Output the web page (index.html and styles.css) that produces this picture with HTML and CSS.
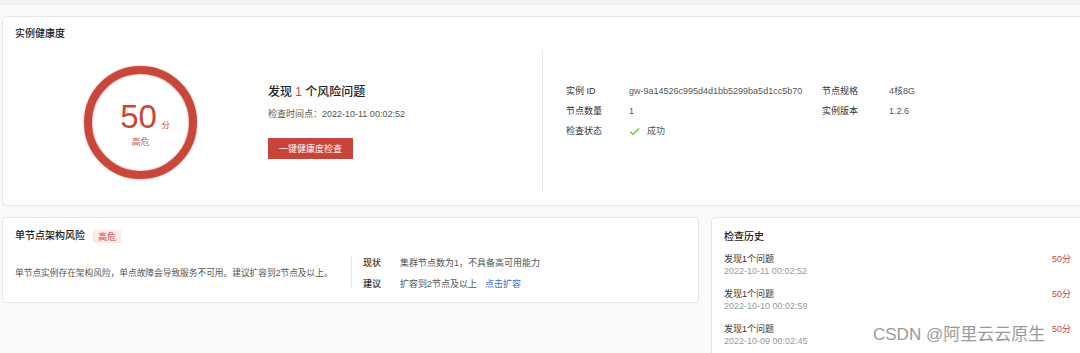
FILE: index.html
```html
<!DOCTYPE html>
<html lang="zh-CN">
<head>
<meta charset="utf-8">
<link rel="stylesheet" href="styles.css">
</head>
<body>
<div class="page">
  <div class="topbar"></div>

  <section class="card health">
    <h2 class="card-title">实例健康度</h2>
    <div class="health-body">
      <div class="health-left">
        <div class="score-ring">
          <div class="score-line"><span class="score-num">50</span><span class="score-unit">分</span></div>
          <div class="score-level">高危</div>
        </div>
        <div class="summary">
          <div class="summary-title">发现 <span class="red">1</span> 个风险问题</div>
          <div class="summary-time">检查时间点：2022-10-11 00:02:52</div>
          <button class="btn-primary">一键健康度检查</button>
        </div>
      </div>
      <div class="vdivider"></div>
      <div class="info">
        <div class="info-label">实例 ID</div>
        <div class="info-value">gw-9a14526c995d4d1bb5299ba5d1cc5b70</div>
        <div class="info-label">节点规格</div>
        <div class="info-value">4核8G</div>
        <div class="info-label">节点数量</div>
        <div class="info-value">1</div>
        <div class="info-label">实例版本</div>
        <div class="info-value">1.2.6</div>
        <div class="info-label">检查状态</div>
        <div class="info-value status">
          <svg class="check" viewBox="0 0 12 10" width="11" height="9"><path d="M1 5.2 L4.3 8.3 L11 1.5" fill="none" stroke="#52c41a" stroke-width="1.3"/></svg>
          成功
        </div>
      </div>
    </div>
  </section>

  <div class="lower">
    <section class="card risk">
      <div class="risk-head">
        <h3 class="card-title">单节点架构风险</h3>
        <span class="tag">高危</span>
      </div>
      <div class="risk-body">
        <div class="risk-desc">单节点实例存在架构风险，单点故障会导致服务不可用。建议扩容到2节点及以上。</div>
        <div class="vdivider short"></div>
        <div class="risk-detail">
          <div class="detail-row"><span class="detail-label">现状</span><span>集群节点数为1，不具备高可用能力</span></div>
          <div class="detail-row"><span class="detail-label">建议</span><span>扩容到2节点及以上</span><a class="link">点击扩容</a></div>
        </div>
      </div>
    </section>

    <section class="card history">
      <h3 class="card-title">检查历史</h3>
      <ul class="history-list">
        <li class="history-item">
          <div><div class="h-name">发现1个问题</div><div class="h-date">2022-10-11 00:02:52</div></div>
          <span class="h-score">50分</span>
        </li>
        <li class="history-item">
          <div><div class="h-name">发现1个问题</div><div class="h-date">2022-10-10 00:02:59</div></div>
          <span class="h-score">50分</span>
        </li>
        <li class="history-item">
          <div><div class="h-name">发现1个问题</div><div class="h-date">2022-10-09 00:02:45</div></div>
          <span class="h-score">50分</span>
        </li>
      </ul>
    </section>
  </div>

  <div class="watermark">CSDN @阿里云云原生</div>
</div>
</body>
</html>
```

FILE: styles.css
```css
* { box-sizing: border-box; }
html, body { margin: 0; padding: 0; }
body {
  background: #fafafa;
  font-family: "Liberation Sans", "Noto Sans CJK SC", sans-serif;
  color: #333;
  width: 1080px;
  height: 353px;
  overflow: hidden;
}
.page { position: relative; width: 1080px; height: 353px; overflow: hidden; }
.topbar { height: 5px; background: #f1f1f1; border-bottom: 1px solid #ececec; }

.card {
  background: #fff;
  border: 1px solid #e6e6e6;
  border-radius: 4px;
}
.card-title {
  margin: 0;
  font-size: 10px;
  line-height: 14px;
  font-weight: 500;
  color: #222;
}

/* health card */
.health {
  margin: 11px 0 0 2px;
  width: 1100px;
  height: 190px;
  padding: 10px 12px 0;
}
.health-body {
  display: flex;
  height: 143px;
  margin-top: 9px;
  margin-left: -13px;
}
.health-left {
  width: 540px;
  display: flex;
  align-items: center;
}
.score-ring {
  width: 113px;
  height: 113px;
  margin-left: 82px;
  margin-top: 2px;
  border-radius: 50%;
  border: 8px solid #c9463a;
  box-shadow: 0 0 1.5px #c9463a, inset 0 0 1.5px #c9463a;
  display: flex;
  flex-direction: column;
  align-items: center;
  justify-content: center;
  color: #c9463a;
  padding-top: 4px;
}
.score-line { display: flex; align-items: baseline; margin-left: 9px; }
.score-num { font-size: 33px; line-height: 30px; }
.score-unit { font-size: 8px; margin-left: 5px; font-family: "Noto Sans CJK SC", sans-serif; }
.score-level { font-size: 9px; line-height: 12px; margin-top: 4px; color: #d05a4f; }

.summary { margin-left: 71px; display: flex; flex-direction: column; align-items: flex-start; }
.summary-title { font-size: 12px; line-height: 16px; font-weight: 500; color: #222; }
.red { color: #cc4539; }
.summary-time { font-size: 9px; line-height: 12px; color: #555; margin-top: 8px; }
.btn-primary {
  margin-top: 18px;
  width: 85px;
  height: 21px;
  border: none;
  background: #c8443a;
  color: #fff;
  font-family: "Noto Sans CJK SC", sans-serif;
  font-size: 9px;
  padding: 0;
  cursor: pointer;
}

.vdivider { width: 1px; background: #e8e8e8; align-self: stretch; }

.info {
  padding: 31px 0 0 23px;
  display: grid;
  grid-template-columns: 63px 193px 67px auto;
  grid-auto-rows: 20px;
  align-content: start;
  font-size: 9px;
  line-height: 20px;
}
.info-label { color: #333; }
.info-value { color: #555; }
.status { display: flex; align-items: center; gap: 7px; }

/* lower row */
.lower { display: flex; margin: 11px 0 0 2px; gap: 12px; }

.risk { flex: 0 0 697px; height: 86px; padding: 11px 12px 12px; }
.risk-head { display: flex; align-items: center; gap: 8px; }
.tag {
  display: inline-block;
  height: 13px;
  line-height: 13px;
  padding: 0 5px;
  background: #fbeae8;
  color: #d0483c;
  font-size: 9px;
  font-family: "Noto Sans CJK SC", sans-serif;
}
.risk-body { display: flex; height: 33px; margin-top: 13px; }
.risk-desc {
  width: 336px;
  font-size: 8.7px;
  color: #555;
  align-self: center;
  white-space: nowrap;
}
.vdivider.short { background: #ebebeb; }
.risk-detail { padding-left: 11px; display: flex; flex-direction: column; gap: 7px; font-size: 9px; line-height: 14px; color: #555; }
.detail-row { display: flex; }
.detail-label { width: 37px; color: #333; font-weight: 500; }
.link { color: #2e75d3; margin-left: 8px; cursor: pointer; }

.history { flex: 0 0 375px; height: 150px; padding: 12px 14px 0 12px; }
.history-list { list-style: none; margin: 9px 0 0; padding: 0; display: flex; flex-direction: column; gap: 11px; }
.history-item { display: flex; justify-content: space-between; align-items: flex-start; }
.h-name { font-size: 9px; line-height: 12px; color: #333; }
.h-date { font-size: 9px; line-height: 12px; color: #999; }
.h-score { font-size: 9px; line-height: 12px; color: #cc4539; }

.watermark {
  position: absolute;
  left: 873px;
  top: 324px;
  font-size: 17px;
  line-height: 22px;
  color: #9a9a9a;
  font-family: "Liberation Sans", "Noto Sans CJK SC", sans-serif;
  text-shadow: 0 0 2px #fff, 0 0 2px #fff;
  white-space: nowrap;
}
```
